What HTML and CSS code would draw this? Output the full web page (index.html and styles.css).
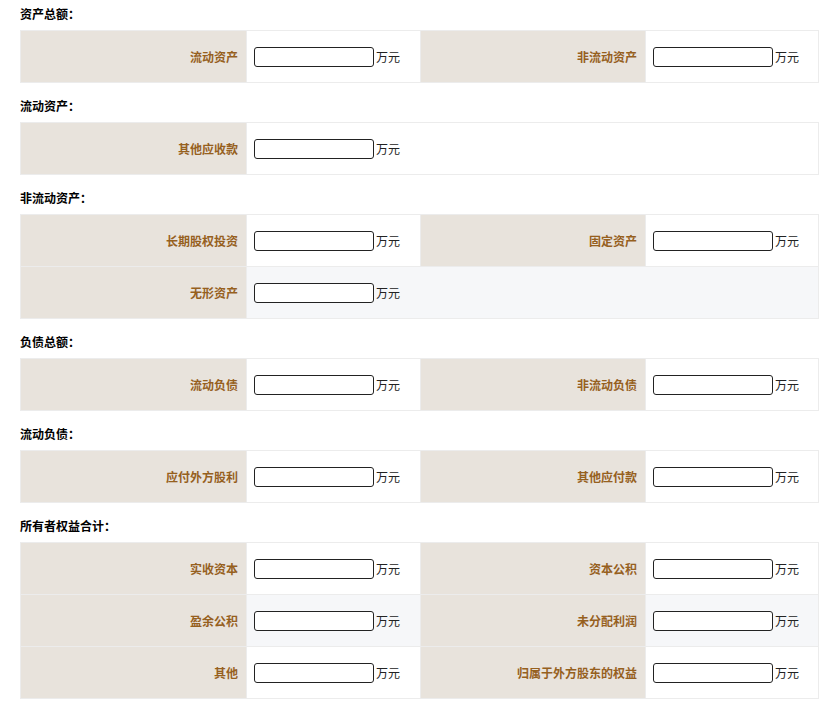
FILE: index.html
```html
<!DOCTYPE html>
<html lang="zh">
<head>
<meta charset="utf-8">
<link rel="stylesheet" href="styles.css">
</head>
<body>
<div class="page">
  <div class="section">
    <div class="title">资产总额：</div>
    <table class="grid">
      <colgroup><col class="c1"><col class="c2"><col class="c3"><col class="c4"></colgroup>
      <tr>
        <th>流动资产</th><td><input class="ipt" type="text"><span class="unit">万元</span></td>
        <th>非流动资产</th><td><input class="ipt" type="text"><span class="unit">万元</span></td>
      </tr>
    </table>
  </div>
  <div class="section">
    <div class="title">流动资产：</div>
    <table class="grid">
      <colgroup><col class="c1"><col class="c2"><col class="c3"><col class="c4"></colgroup>
      <tr>
        <th>其他应收款</th><td colspan="3"><input class="ipt" type="text"><span class="unit">万元</span></td>
      </tr>
    </table>
  </div>
  <div class="section">
    <div class="title">非流动资产：</div>
    <table class="grid">
      <colgroup><col class="c1"><col class="c2"><col class="c3"><col class="c4"></colgroup>
      <tr>
        <th>长期股权投资</th><td><input class="ipt" type="text"><span class="unit">万元</span></td>
        <th>固定资产</th><td><input class="ipt" type="text"><span class="unit">万元</span></td>
      </tr>
      <tr class="alt">
        <th>无形资产</th><td colspan="3"><input class="ipt" type="text"><span class="unit">万元</span></td>
      </tr>
    </table>
  </div>
  <div class="section">
    <div class="title">负债总额：</div>
    <table class="grid">
      <colgroup><col class="c1"><col class="c2"><col class="c3"><col class="c4"></colgroup>
      <tr>
        <th>流动负债</th><td><input class="ipt" type="text"><span class="unit">万元</span></td>
        <th>非流动负债</th><td><input class="ipt" type="text"><span class="unit">万元</span></td>
      </tr>
    </table>
  </div>
  <div class="section">
    <div class="title">流动负债：</div>
    <table class="grid">
      <colgroup><col class="c1"><col class="c2"><col class="c3"><col class="c4"></colgroup>
      <tr>
        <th>应付外方股利</th><td><input class="ipt" type="text"><span class="unit">万元</span></td>
        <th>其他应付款</th><td><input class="ipt" type="text"><span class="unit">万元</span></td>
      </tr>
    </table>
  </div>
  <div class="section">
    <div class="title">所有者权益合计：</div>
    <table class="grid">
      <colgroup><col class="c1"><col class="c2"><col class="c3"><col class="c4"></colgroup>
      <tr>
        <th>实收资本</th><td><input class="ipt" type="text"><span class="unit">万元</span></td>
        <th>资本公积</th><td><input class="ipt" type="text"><span class="unit">万元</span></td>
      </tr>
      <tr class="alt">
        <th>盈余公积</th><td><input class="ipt" type="text"><span class="unit">万元</span></td>
        <th>未分配利润</th><td><input class="ipt" type="text"><span class="unit">万元</span></td>
      </tr>
      <tr>
        <th>其他</th><td><input class="ipt" type="text"><span class="unit">万元</span></td>
        <th>归属于外方股东的权益</th><td><input class="ipt" type="text"><span class="unit">万元</span></td>
      </tr>
    </table>
  </div>
</div>
</body>
</html>
```
FILE: styles.css
```css
html, body {
  margin: 0;
  padding: 0;
  background: #ffffff;
}
body {
  font-family: "Noto Sans CJK SC", "Liberation Sans", sans-serif;
  font-size: 12px;
  color: #000;
}
.page {
  padding: 0 2px 0 20px;
}
.section {
  margin-bottom: 9px;
}
.title {
  font-family: "Noto Sans CJK TC", "Noto Sans CJK SC", sans-serif;
  font-weight: bold;
  line-height: 28px;
  height: 28px;
  margin-bottom: 2px;
}
.grid {
  width: 798px;
  border-collapse: collapse;
  table-layout: fixed;
}
.c1 { width: 226px; }
.c2 { width: 174px; }
.c3 { width: 225px; }
.c4 { width: 173px; }
.grid th, .grid td {
  height: 52px;
  border: 1px solid #ececec;
  padding: 0 8px 0 7px;
  box-sizing: border-box;
  vertical-align: middle;
}
.grid th {
  background: #e8e3dc;
  color: #96601e;
  text-align: right;
  font-weight: bold;
}
.grid td {
  background: #ffffff;
  white-space: nowrap;
}
.grid tr.alt td {
  background: #f6f7f9;
}
.ipt {
  width: 120px;
  height: 20px;
  box-sizing: border-box;
  border: 1px solid #222;
  border-radius: 3px;
  padding: 0 3px;
  margin: 0;
  vertical-align: middle;
  background: #fff;
}
.unit {
  margin-left: 2px;
  vertical-align: middle;
  color: #222;
}
```
